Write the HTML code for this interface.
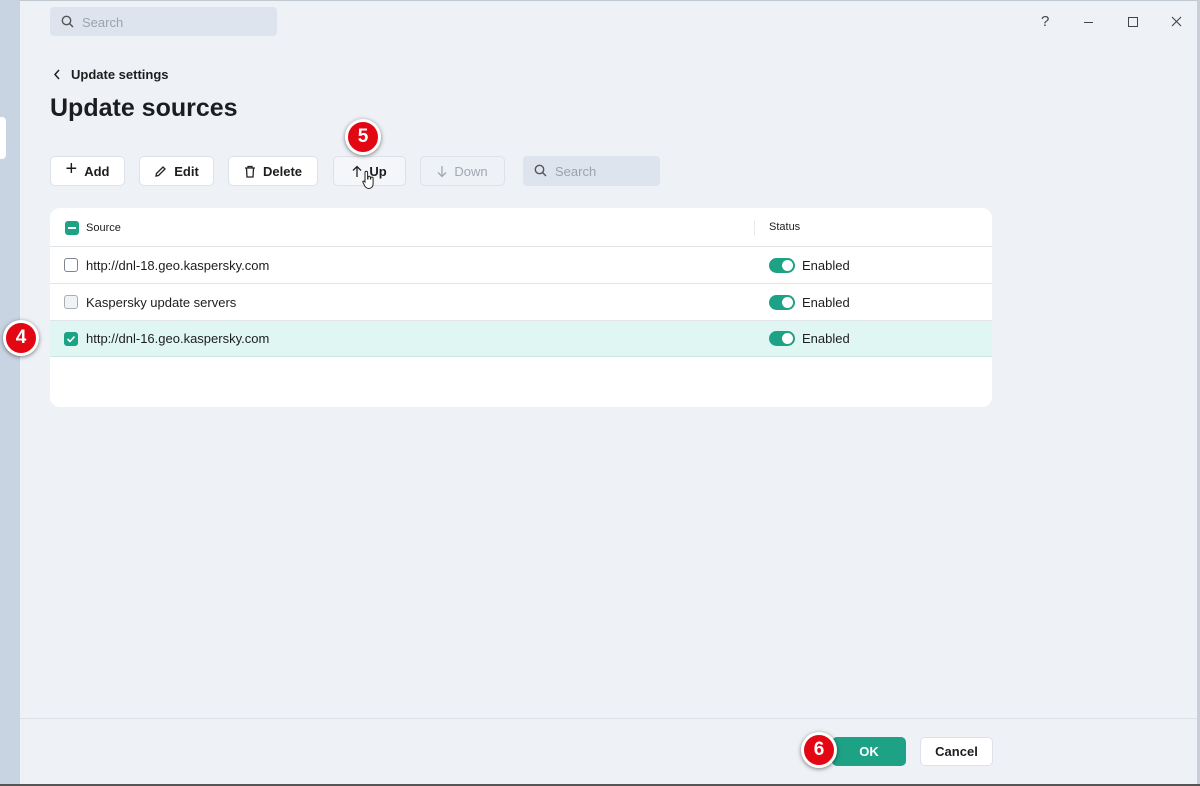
<!DOCTYPE html>
<html><head><style>
*{box-sizing:border-box;margin:0;padding:0}
body{width:1200px;height:786px;overflow:hidden;background:#eef1f6;font-family:"Liberation Sans",sans-serif;color:#1d1d1f;position:relative}
.abs{position:absolute}
.btn{position:absolute;top:156px;height:30px;background:#fff;border:1px solid #dde2ea;border-radius:5px;font-size:13px;font-weight:bold;display:flex;align-items:center;justify-content:center;gap:7px}
.badge{position:absolute;width:36px;height:36px;border-radius:50%;background:#e30613;border:3px solid #fff;box-shadow:0 1px 4px rgba(0,0,0,.5);color:#fff;font-weight:bold;font-size:19px;display:flex;align-items:center;justify-content:center}
.row{position:absolute;left:0;width:942px;height:37px;border-top:1px solid #e1e5ea;font-size:13px;display:flex;align-items:center}
.cb{position:absolute;left:14px;width:14px;height:14px;border:1.5px solid #7b8593;border-radius:3px;background:#fff}
.tg{position:absolute;left:719px;width:26px;height:15px;border-radius:8px;background:#1ea285}
.tg:after{content:"";position:absolute;right:2px;top:2px;width:11px;height:11px;border-radius:50%;background:#fff}
.en{position:absolute;left:752px}
</style></head><body>
<div class="abs" style="left:0;top:0;width:20px;height:786px;background:#c8d4e2"></div>
<div class="abs" style="left:0;top:117px;width:6px;height:42px;background:#fff;border-radius:0 4px 4px 0"></div>
<div class="abs" style="left:20px;top:0;width:1180px;height:1px;background:#c0c8d2"></div>
<div class="abs" style="left:1197px;top:0;width:3px;height:786px;background:#c9cfd8"></div>
<div class="abs" style="left:50px;top:7px;width:227px;height:29px;background:#dde4ee;border-radius:4px;color:#9aa3ae;font-size:13px;padding:8px 0 0 32px">Search
<svg class="abs" style="left:11px;top:8px" width="13" height="13" viewBox="0 0 13 13"><circle cx="5.5" cy="5.5" r="4.2" fill="none" stroke="#555" stroke-width="1.4"/><path d="M8.5 8.5L12 12" stroke="#555" stroke-width="1.4"/></svg></div>
<div class="abs" style="left:1041px;top:13px;font-size:15px;color:#444">?</div>
<div class="abs" style="left:1084px;top:22px;width:9px;height:1px;background:#444"></div>
<div class="abs" style="left:1128px;top:17px;width:10px;height:10px;border:1px solid #444"></div>
<svg class="abs" style="left:1171px;top:16px" width="11" height="11"><path d="M1 1L10 10M10 1L1 10" stroke="#444" stroke-width="1.1"/></svg>
<svg class="abs" style="left:53px;top:69px" width="8" height="11"><path d="M6 1L2 5.5L6 10" fill="none" stroke="#222" stroke-width="1.5"/></svg>
<div class="abs" style="left:71px;top:67px;font-size:13px;font-weight:bold">Update settings</div>
<div class="abs" style="left:50px;top:94px;font-size:25px;font-weight:bold">Update sources</div>
<div class="btn" style="left:50px;width:75px"><span style="font-size:20px;font-weight:normal;margin-top:-3px">+</span>Add</div>
<div class="btn" style="left:139px;width:75px"><svg width="13" height="13"><path d="M2 11L2.5 8.5L9 2L11 4L4.5 10.5Z" fill="none" stroke="#222" stroke-width="1.3"/></svg>Edit</div>
<div class="btn" style="left:228px;width:90px"><svg width="12" height="13"><path d="M1 3H11M4 3V1.5H8V3M2.5 3L3 12H9L9.5 3" fill="none" stroke="#222" stroke-width="1.3"/></svg>Delete</div>
<div class="btn" style="left:333px;width:73px;background:#f4f6f9"><svg width="10" height="13"><path d="M5 12V2M1 5.5L5 1.5L9 5.5" fill="none" stroke="#222" stroke-width="1.3"/></svg>Up</div>
<svg class="abs" style="left:362px;top:170px" width="14" height="20" viewBox="0 0 14 20"><path d="M3 2.5a1.3 1.3 0 0 1 2.6 0V9h.4V7.5a1.2 1.2 0 0 1 2.4 0V9h.3V8.3a1.2 1.2 0 0 1 2.4 0V14c0 2.5-1.8 4.5-4.3 4.5-2 0-3-1-4-2.5L1 12.5c-.6-.9.5-1.9 1.4-1.1L3 12Z" fill="#fff" stroke="#222" stroke-width="1"/></svg>
<div class="btn" style="left:420px;width:85px;background:#eef1f6;color:#a0a8b2;font-weight:normal"><svg width="10" height="13"><path d="M5 1V11M1 7.5L5 11.5L9 7.5" fill="none" stroke="#a0a8b2" stroke-width="1.3"/></svg>Down</div>
<div class="abs" style="left:523px;top:156px;width:137px;height:30px;background:#dde4ee;border-radius:4px;color:#9aa3ae;font-size:13px;padding:8px 0 0 32px">Search
<svg class="abs" style="left:11px;top:8px" width="13" height="13" viewBox="0 0 13 13"><circle cx="5.5" cy="5.5" r="4.2" fill="none" stroke="#555" stroke-width="1.4"/><path d="M8.5 8.5L12 12" stroke="#555" stroke-width="1.4"/></svg></div>
<div class="badge" style="left:345px;top:119px">5</div>
<div class="abs" style="left:50px;top:208px;width:942px;height:199px;background:#fff;border-radius:10px;overflow:hidden">
 <div class="abs" style="left:15px;top:13px;width:14px;height:14px;border-radius:3px;background:#1ea285"><div style="margin:6px 3px;height:2px;background:#fff"></div></div>
 <div class="abs" style="left:36px;top:14px;font-size:11px">Source</div>
 <div class="abs" style="left:704px;top:12px;width:1px;height:16px;background:#e6e9ee"></div>
 <div class="abs" style="left:719px;top:13px;font-size:11px">Status</div>
 <div class="row" style="top:38px"><div class="cb"></div><span style="margin-left:36px">http://dnl-18.geo.kaspersky.com</span><div class="tg"></div><span class="en">Enabled</span></div>
 <div class="row" style="top:75px"><div class="cb" style="border-color:#a7aeb8;background:#f0f2f5"></div><span style="margin-left:36px">Kaspersky update servers</span><div class="tg"></div><span class="en">Enabled</span></div>
 <div class="row" style="top:112px;background:#e0f6f2;border-bottom:1px solid #cfe7e2"><div class="cb" style="background:#1ea285;border-color:#1ea285"><svg class="abs" style="left:1px;top:1px" width="10" height="10"><path d="M1.5 5L4 7.5L8.5 2.5" fill="none" stroke="#fff" stroke-width="1.6"/></svg></div><span style="margin-left:36px">http://dnl-16.geo.kaspersky.com</span><div class="tg"></div><span class="en">Enabled</span></div>
</div>
<div class="badge" style="left:3px;top:320px">4</div>
<div class="abs" style="left:20px;top:718px;width:1177px;height:1px;background:#dde1e7"></div>
<div class="abs" style="left:832px;top:737px;width:74px;height:29px;background:#1ea285;border-radius:5px;color:#fff;font-size:13px;font-weight:bold;text-align:center;line-height:29px">OK</div>
<div class="abs" style="left:920px;top:737px;width:73px;height:29px;background:#fff;border:1px solid #dde2ea;border-radius:5px;font-size:13px;font-weight:bold;text-align:center;line-height:27px">Cancel</div>
<div class="badge" style="left:801px;top:732px">6</div>
<div class="abs" style="left:0;top:784px;width:1200px;height:2px;background:#555"></div>
</body></html>
